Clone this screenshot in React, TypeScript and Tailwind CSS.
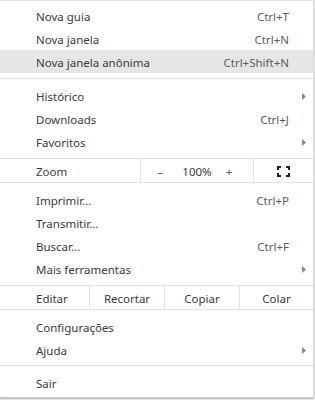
import React from "react";

const font = { fontFamily: '"Noto Sans", "Open Sans", sans-serif' };

function Row({ label, shortcut, arrow, hl }: { label: string; shortcut?: string; arrow?: boolean; hl?: boolean }) {
  return (
    <div className={`h-[23px] flex items-center pl-[36px] pr-[24px] pt-[2px] ${hl ? "bg-[#e6e6e6]" : ""}`}>
      <span className="flex-1 text-[#3a3a3a]">{label}</span>
      {shortcut && <span className="text-[#5c5c5c]">{shortcut}</span>}
      {arrow && (
        <svg width="4" height="7" viewBox="0 0 4 7" className="mr-[-17px]">
          <path d="M0 0 L4 3.5 L0 7 Z" fill="#8a8a8a" />
        </svg>
      )}
    </div>
  );
}

function Line() {
  return <div className="h-px bg-[#e3e3e3]" />;
}

export default function App() {
  return (
    <div className="bg-white w-[315px] h-[400px]" style={font}>
      <div className="w-[314px] h-[398px] border-t border-r border-b border-t-[#e4e4e4] border-r-[#d8d8d8] border-b-[#c8c8c8] shadow-[0_1px_2px_rgba(0,0,0,0.35)] text-[11.5px] leading-none flex flex-col">
        <div className="pt-[3px] pb-[5px]">
          <Row label="Nova guia" shortcut="Ctrl+T" />
          <Row label="Nova janela" shortcut="Ctrl+N" />
          <Row label="Nova janela anônima" shortcut="Ctrl+Shift+N" hl />
        </div>
        <Line />
        <div className="pt-[5px] pb-[5px]">
          <Row label="Histórico" arrow />
          <Row label="Downloads" shortcut="Ctrl+J" />
          <Row label="Favoritos" arrow />
        </div>
        <Line />
        <div className="h-[23px] flex items-center text-[#3a3a3a] pt-[2px]">
          <span className="pl-[36px] w-[140px]">Zoom</span>
          <div className="self-stretch -mt-[2px] w-px bg-[#e3e3e3]" />
          <div className="w-[112px] flex items-center">
            <span className="w-[38px] text-center text-[#5c5c5c]">–</span>
            <span className="flex-1 text-center">100%</span>
            <span className="w-[38px] text-center text-[#5c5c5c] pr-[10px]">+</span>
          </div>
          <div className="self-stretch -mt-[2px] w-px bg-[#e3e3e3]" />
          <div className="flex-1 flex items-center justify-center -mt-[1px]">
            <svg width="13" height="11" viewBox="0 0 13 11">
              <path d="M1 4 V1 H4 M9 1 H12 V4 M12 7 V10 H9 M4 10 H1 V7" fill="none" stroke="#222" strokeWidth="2" />
            </svg>
          </div>
        </div>
        <Line />
        <div className="pt-[5px] pb-[5px]">
          <Row label="Imprimir..." shortcut="Ctrl+P" />
          <Row label="Transmitir..." />
          <Row label="Buscar..." shortcut="Ctrl+F" />
          <Row label="Mais ferramentas" arrow />
        </div>
        <Line />
        <div className="h-[23px] flex items-center text-[#3a3a3a] pt-[2px]">
          <span className="pl-[36px] w-[89px]">Editar</span>
          <div className="self-stretch -mt-[2px] w-px bg-[#e3e3e3]" />
          <span className="w-[74px] text-center">Recortar</span>
          <div className="self-stretch -mt-[2px] w-px bg-[#e3e3e3]" />
          <span className="w-[74px] text-center">Copiar</span>
          <div className="self-stretch -mt-[2px] w-px bg-[#e3e3e3]" />
          <span className="flex-1 text-center">Colar</span>
        </div>
        <Line />
        <div className="pt-[5px] pb-[4px]">
          <Row label="Configurações" />
          <Row label="Ajuda" arrow />
        </div>
        <Line />
        <div className="pt-[5px]">
          <Row label="Sair" />
        </div>
      </div>
    </div>
  );
}
